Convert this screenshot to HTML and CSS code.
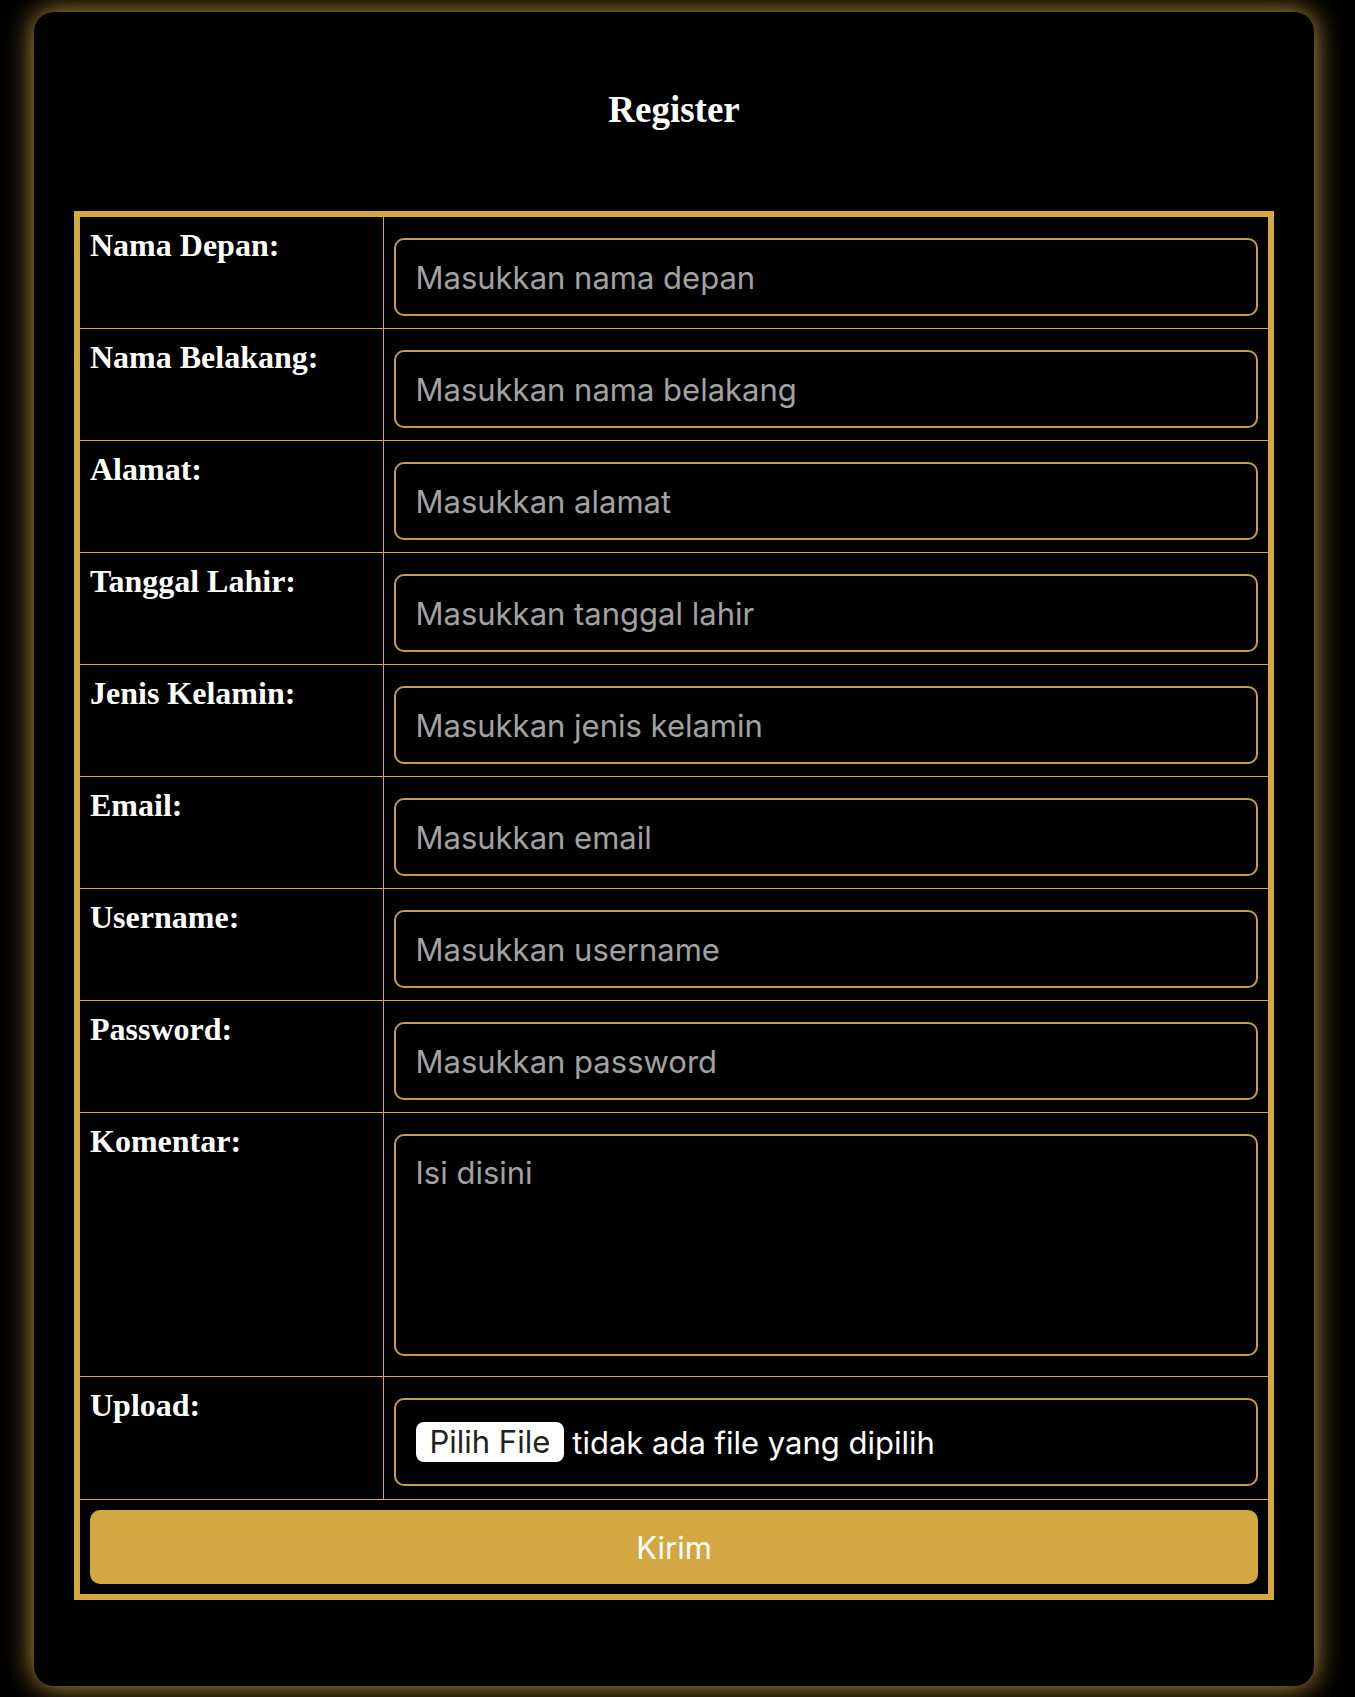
FILE: index.html
```html
<!DOCTYPE html>
<html lang="id">
<head>
<meta charset="utf-8">
<title>Register</title>
<link rel="stylesheet" href="styles.css">
</head>
<body>
<div class="card">
  <h1 class="title">Register</h1>
  <form class="form">
    <table class="grid">
      <tr>
        <td class="label">Nama Depan:</td>
        <td class="field"><input class="input" type="text" placeholder="Masukkan nama depan"></td>
      </tr>
      <tr>
        <td class="label">Nama Belakang:</td>
        <td class="field"><input class="input" type="text" placeholder="Masukkan nama belakang"></td>
      </tr>
      <tr>
        <td class="label">Alamat:</td>
        <td class="field"><input class="input" type="text" placeholder="Masukkan alamat"></td>
      </tr>
      <tr>
        <td class="label">Tanggal Lahir:</td>
        <td class="field"><input class="input" type="text" placeholder="Masukkan tanggal lahir"></td>
      </tr>
      <tr>
        <td class="label">Jenis Kelamin:</td>
        <td class="field"><input class="input" type="text" placeholder="Masukkan jenis kelamin"></td>
      </tr>
      <tr>
        <td class="label">Email:</td>
        <td class="field"><input class="input" type="text" placeholder="Masukkan email"></td>
      </tr>
      <tr>
        <td class="label">Username:</td>
        <td class="field"><input class="input" type="text" placeholder="Masukkan username"></td>
      </tr>
      <tr>
        <td class="label">Password:</td>
        <td class="field"><input class="input" type="password" placeholder="Masukkan password"></td>
      </tr>
      <tr>
        <td class="label">Komentar:</td>
        <td class="field"><textarea class="input textarea" placeholder="Isi disini"></textarea></td>
      </tr>
      <tr>
        <td class="label">Upload:</td>
        <td class="field">
          <div class="input file">
            <span class="file-btn">Pilih File</span>
            <span class="file-text">tidak ada file yang dipilih</span>
          </div>
        </td>
      </tr>
      <tr>
        <td class="submit-cell" colspan="2"><button class="submit" type="button">Kirim</button></td>
      </tr>
    </table>
  </form>
</div>
</body>
</html>
```

FILE: styles.css
```css
* {
  box-sizing: border-box;
}

html, body {
  margin: 0;
  padding: 0;
  background: #000;
}

body {
  padding: 12px 0 11px 34px;
}

.card {
  width: 1280px;
  background: #000;
  border-radius: 20px;
  padding: 40px 40px 86px;
  box-shadow: 0 0 28px rgba(212, 168, 67, 0.95);
}

.title {
  margin: 37px 0 80px;
  font-family: "Liberation Serif", "Times New Roman", serif;
  font-weight: bold;
  font-size: 37px;
  line-height: 42px;
  color: #fff;
  text-align: center;
}

.form {
  margin: 0;
}

.grid {
  width: 100%;
  border-collapse: collapse;
  border: 6px solid #d4a843;
  table-layout: fixed;
}

.grid td {
  border: 1px solid #d4a843;
  padding: 10px;
  vertical-align: top;
}

.grid td.label {
  width: 306px;
  font-family: "Liberation Serif", "Times New Roman", serif;
  font-weight: bold;
  font-size: 32px;
  color: #fff;
}

.input {
  display: block;
  width: 100%;
  height: 78px;
  margin: 11px 0 2px;
  padding: 0 20px;
  background: #000;
  border: 2px solid #c29d52;
  border-radius: 10px;
  color: #fff;
  font-family: Inter, "Noto Sans", sans-serif;
  font-size: 31px;
  outline: none;
}

.input::placeholder {
  color: #a2a2a2;
}

.textarea {
  height: 222px;
  margin-bottom: 10px;
  padding: 18px 20px;
  resize: none;
}

.file {
  display: flex;
  align-items: center;
  height: 88px;
  margin-bottom: 3px;
}

.file-btn {
  display: inline-block;
  height: 40px;
  line-height: 40px;
  padding: 0 14px;
  background: #fff;
  color: #222;
  border-radius: 8px;
  font-size: 31px;
}

.file-text {
  margin-left: 8px;
  color: #fff;
  font-size: 31px;
}

.grid td.submit-cell {
  padding: 10px 10px 10px;
}

.submit {
  display: block;
  width: 100%;
  height: 74px;
  border: none;
  border-radius: 10px;
  background: #d3a842;
  color: #fff;
  font-family: Inter, "Noto Sans", sans-serif;
  font-size: 31px;
  cursor: pointer;
}
```
